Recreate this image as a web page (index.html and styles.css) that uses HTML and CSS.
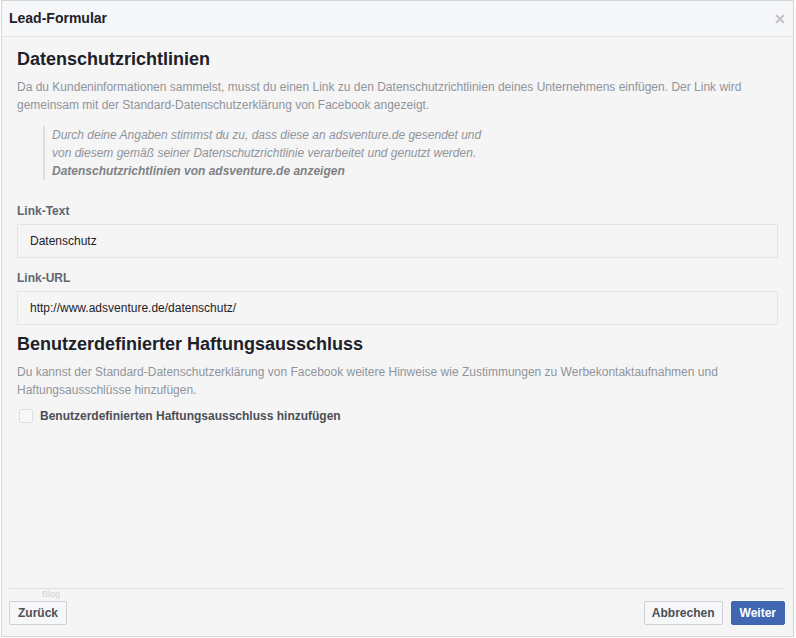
FILE: index.html
```html
<!DOCTYPE html>
<html lang="de">
<head>
<meta charset="utf-8">
<title>Lead-Formular</title>
<link rel="stylesheet" href="styles.css">
</head>
<body>
<div class="dialog">
  <div class="header">
    <span class="title">Lead-Formular</span>
    <span class="close">&#x2715;</span>
  </div>
  <div class="content">
    <h2 class="heading">Datenschutzrichtlinien</h2>
    <p class="desc">Da du Kundeninformationen sammelst, musst du einen Link zu den Datenschutzrichtlinien deines Unternehmens einfügen. Der Link wird gemeinsam mit der Standard-Datenschutzerklärung von Facebook angezeigt.</p>
    <blockquote class="quote">
      Durch deine Angaben stimmst du zu, dass diese an adsventure.de gesendet und<br>
      von diesem gemäß seiner Datenschutzrichtlinie verarbeitet und genutzt werden.<br>
      <b>Datenschutzrichtlinien von adsventure.de anzeigen</b>
    </blockquote>
    <div class="field">
      <div class="label">Link-Text</div>
      <div class="input">Datenschutz</div>
    </div>
    <div class="field second">
      <div class="label">Link-URL</div>
      <div class="input">http://www.adsventure.de/datenschutz/</div>
    </div>
    <h2 class="heading h2b">Benutzerdefinierter Haftungsausschluss</h2>
    <p class="desc">Du kannst der Standard-Datenschutzerklärung von Facebook weitere Hinweise wie Zustimmungen zu Werbekontaktaufnahmen und Haftungsausschlüsse hinzufügen.</p>
    <label class="check">
      <span class="box"></span>
      <span class="check-label">Benutzerdefinierten Haftungsausschluss hinzufügen</span>
    </label>
  </div>
  <div class="footer">
    <span class="blog">Blog</span>
    <button class="btn">Zurück</button>
    <div class="spacer"></div>
    <button class="btn narrow">Abbrechen</button>
    <button class="btn primary">Weiter</button>
  </div>
</div>
</body>
</html>
```

FILE: styles.css
```css
* { box-sizing: border-box; }
html, body {
  margin: 0;
  padding: 0;
  background: #ffffff;
}
body {
  font-family: "Liberation Sans", Arial, sans-serif;
  font-size: 12px;
  color: #1d2129;
  width: 796px;
  height: 638px;
  overflow: hidden;
}
.dialog {
  margin-left: 1px;
  width: 793px;
  height: 637px;
  border: 1px solid #d3d5d9;
  background: #f5f5f5;
  display: flex;
  flex-direction: column;
}
.header {
  height: 36px;
  flex: none;
  background: #f6f7f9;
  border-bottom: 1px solid #e1e3e6;
  box-shadow: 0 1px 0 #fafafa;
  display: flex;
  align-items: center;
  padding: 0 8px 0 7px;
}
.title {
  font-size: 14px;
  font-weight: bold;
  color: #1d2129;
  flex: 1;
  margin-top: -2px;
}
.close {
  color: #bec2c9;
  font-size: 14px;
  font-weight: bold;
  margin-right: -1px;
}
.content {
  flex: 1;
  padding: 11px 15px 0 15px;
}
.heading {
  margin: 0;
  font-size: 18px;
  line-height: 22px;
  font-weight: bold;
  color: #1d2129;
}
.desc {
  margin: 8px 0 0 0;
  line-height: 18px;
  color: #90949c;
  font-size: 12px;
}
.quote {
  margin: 12px 0 0 26px;
  padding: 0 0 0 7px;
  border-left: 2px solid #dcdee2;
  font-style: italic;
  color: #90949c;
  line-height: 18px;
}
.quote b {
  color: #7f8185;
}
.field {
  margin-top: 22px;
}
.field.second {
  margin-top: 11px;
}
.label {
  font-weight: bold;
  color: #606770;
  line-height: 18px;
}
.input {
  margin-top: 4px;
  height: 34px;
  width: 761px;
  border: 1px solid #e3e4e6;
  background: #f5f5f5;
  padding: 0 12px;
  line-height: 32px;
  color: #1d2129;
}
.h2b {
  margin-top: 8px;
}
.check {
  margin-top: 8px;
  display: flex;
  align-items: center;
  height: 18px;
}
.box {
  width: 14px;
  height: 14px;
  margin-left: 2px;
  border: 1px solid #dadde1;
  border-radius: 2px;
  background: #f7f7f7;
}
.check-label {
  margin-left: 7px;
  font-weight: bold;
  color: #4b4f56;
}
.footer {
  flex: none;
  margin: 0 8px 0 7px;
  border-top: 1px solid #dcdee1;
  padding: 12px 0 11px 0;
  display: flex;
  align-items: center;
  gap: 8px;
  position: relative;
}
.blog {
  position: absolute;
  left: 33px;
  top: 0px;
  font-size: 9px;
  color: #d3d3d3;
}
.spacer { flex: 1; }
.btn {
  font-family: "Liberation Sans", Arial, sans-serif;
  font-size: 12px;
  font-weight: bold;
  height: 24px;
  padding: 0 8px;
  border: 1px solid #ced0d4;
  border-radius: 2px;
  background: #f6f7f9;
  color: #4b4f56;
}
.narrow {
  padding: 0 7px;
}
.primary {
  background: #4267b2;
  border-color: #4267b2;
  color: #ffffff;
}
```
